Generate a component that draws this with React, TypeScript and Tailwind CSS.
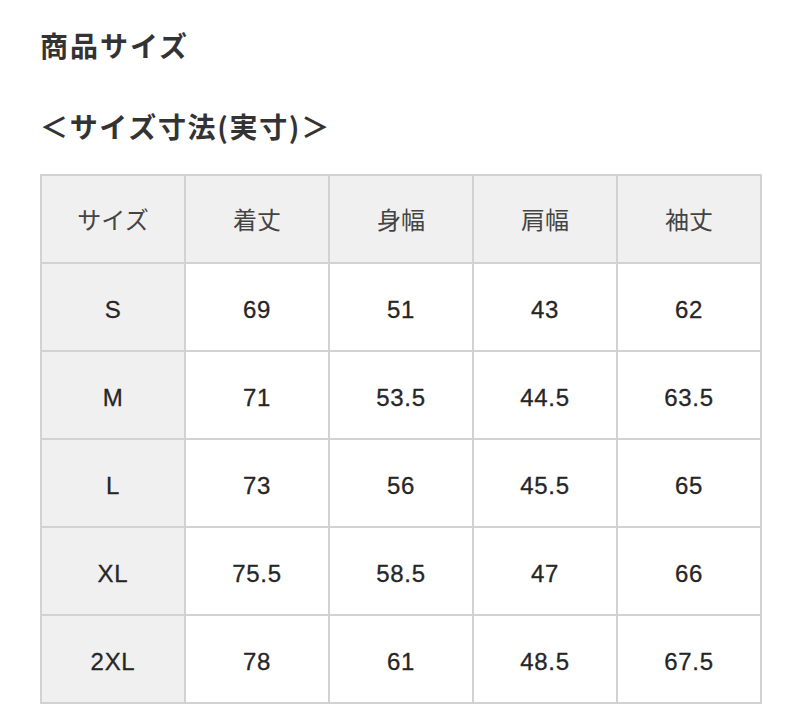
const head = ["サイズ", "着丈", "身幅", "肩幅", "袖丈"];

const rows: string[][] = [
  ["S", "69", "51", "43", "62"],
  ["M", "71", "53.5", "44.5", "63.5"],
  ["L", "73", "56", "45.5", "65"],
  ["XL", "75.5", "58.5", "47", "66"],
  ["2XL", "78", "61", "48.5", "67.5"],
];

export default function App() {
  return (
    <div
      className="min-h-[704px] bg-white px-[40px] text-[#333]"
      style={{ fontFamily: '"Noto Sans CJK JP", "Noto Sans", sans-serif' }}
    >
      <h1 className="pt-[26px] text-[28px] font-bold leading-[38px] tracking-[0.07em]">商品サイズ</h1>
      <h2 className="mt-[43px] text-[28px] font-bold leading-[38px] tracking-[0.06em]">＜サイズ寸法(実寸)＞</h2>

      {/* size table */}
      <div className="mt-[29px] grid w-[722px] grid-cols-5 gap-[2px] bg-[#d2d2d2] p-[2px]">
        {head.map((h) => (
          <div
            key={h}
            className="flex h-[86px] items-center justify-center bg-[#f0f0f0] text-[24px] text-[#444]"
          >
            {h}
          </div>
        ))}
        {rows.map((r) =>
          r.map((v, i) => (
            <div
              key={r[0] + i}
              className={`flex h-[86px] items-center justify-center pt-[6px] font-['Liberation_Sans',sans-serif] text-[24px] tracking-[0.03em] text-[#262626] [-webkit-text-stroke:0.3px_#262626] ${
                i === 0 ? "bg-[#f0f0f0]" : "bg-white"
              }`}
            >
              {v}
            </div>
          ))
        )}
      </div>
    </div>
  );
}
